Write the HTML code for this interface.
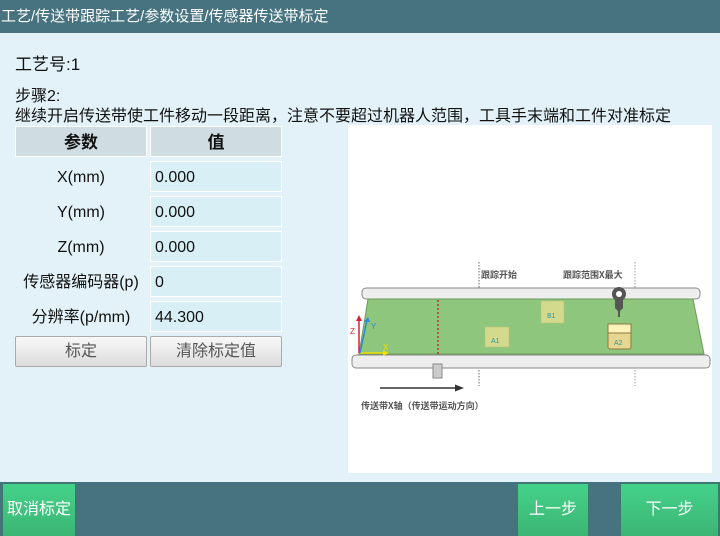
<!DOCTYPE html>
<html><head><meta charset="utf-8"><style>
*{margin:0;padding:0;box-sizing:border-box}
body{width:720px;height:536px;overflow:hidden;background:#e2f2f8;font-family:"Liberation Sans","Noto Sans CJK SC",sans-serif;position:relative;color:#111}
.hdr{position:absolute;left:0;top:0;width:720px;height:33px;background:#46737f;color:#fff;font-size:15px;line-height:33px;padding-left:1px}
.t{position:absolute;font-size:16px;white-space:nowrap}
.cell{position:absolute;height:31px;line-height:31px;font-size:16px;white-space:nowrap}
.h{background:#cfdde2;border:1px solid #fff;text-align:center;font-weight:bold;font-size:17px}
.lab{text-align:center;line-height:33px}
.val{background:#d8eff6;border:1px solid #fff;padding-left:4px}
.btn{position:absolute;height:31px;line-height:29px;text-align:center;font-size:16px;color:#555;background:linear-gradient(#f8f8f8,#dcdcdc);border:1px solid #aaa;border-radius:2px}
.bar{position:absolute;left:0;top:482px;width:720px;height:54px;background:#46737f}
.gb{position:absolute;top:484px;height:52px;background:linear-gradient(#44d28a,#3cb574);color:#fff;font-size:16px;text-align:center;line-height:52px;box-shadow:0 0 2px #2a8a55}
</style></head><body>
<div class="hdr">工艺/传送带跟踪工艺/参数设置/传感器传送带标定</div>
<div class="t" style="left:15px;top:50px;font-size:17px">工艺号:1</div>
<div class="t" style="left:15px;top:82px">步骤2:</div>
<div class="t" style="left:15px;top:102px">继续开启传送带使工件移动一段距离，注意不要超过机器人范围，工具手末端和工件对准标定</div>

<div class="cell h" style="left:15px;top:126px;width:132px">参数</div>
<div class="cell h" style="left:150px;top:126px;width:132px">值</div>
<div class="cell lab" style="left:15px;top:161px;width:132px">X(mm)</div>
<div class="cell val" style="left:150px;top:161px;width:132px">0.000</div>
<div class="cell lab" style="left:15px;top:196px;width:132px">Y(mm)</div>
<div class="cell val" style="left:150px;top:196px;width:132px">0.000</div>
<div class="cell lab" style="left:15px;top:231px;width:132px">Z(mm)</div>
<div class="cell val" style="left:150px;top:231px;width:132px">0.000</div>
<div class="cell lab" style="left:15px;top:266px;width:132px">传感器编码器(p)</div>
<div class="cell val" style="left:150px;top:266px;width:132px">0</div>
<div class="cell lab" style="left:15px;top:301px;width:132px">分辨率(p/mm)</div>
<div class="cell val" style="left:150px;top:301px;width:132px">44.300</div>
<div class="btn" style="left:15px;top:336px;width:132px">标定</div>
<div class="btn" style="left:150px;top:336px;width:132px">清除标定值</div>

<svg style="position:absolute;left:348px;top:125px" width="364" height="348" viewBox="348 125 364 348">
<rect x="348" y="125" width="364" height="348" fill="#fff"/>
<line x1="479" y1="262" x2="479" y2="386" stroke="#666" stroke-width="1" stroke-dasharray="1.5,1.5"/>
<line x1="635" y1="262" x2="635" y2="386" stroke="#999" stroke-width="1" stroke-dasharray="1.5,1.5"/>
<text x="481" y="278" font-size="9" font-weight="bold" fill="#555" font-family="Noto Sans CJK SC,sans-serif">跟踪开始</text>
<text x="563" y="278" font-size="9" font-weight="bold" fill="#555" font-family="Noto Sans CJK SC,sans-serif">跟踪范围X最大</text>
<rect x="362" y="288" width="338" height="11" rx="4" fill="#eee" stroke="#888"/>
<polygon points="368,299 693,299 704,354 359,354" fill="#8fc67e" stroke="#6a9a5a"/>
<line x1="438" y1="300" x2="438" y2="354" stroke="#d3282a" stroke-width="1.5" stroke-dasharray="2,2"/>
<rect x="485" y="327" width="24" height="20" fill="#d3d98d" stroke="#b9c06a" stroke-dasharray="1.5,1.5"/>
<text x="491" y="343" font-size="7" fill="#2a9aa5">A1</text>
<rect x="541" y="301" width="23" height="22" fill="#d3d98d" stroke="#b9c06a" stroke-dasharray="1.5,1.5"/>
<text x="547" y="318" font-size="7" fill="#2a9aa5">B1</text>
<circle cx="619" cy="294" r="7" fill="#555"/><circle cx="619" cy="294" r="3" fill="#fff"/>
<path d="M615 299h8v9l-3 3v6h-2v-6l-3-3z" fill="#555"/>
<rect x="608" y="324" width="23" height="25" rx="2" fill="#e7d690" stroke="#8a7a40"/>
<rect x="608" y="324" width="23" height="9" fill="#fff2b8" stroke="#8a7a40"/>
<text x="614" y="345" font-size="7" fill="#2a9aa5">A2</text>
<rect x="352" y="355" width="358" height="13" rx="4" fill="#eee" stroke="#888"/>
<line x1="360" y1="353" x2="386" y2="353" stroke="#f0e000" stroke-width="1.5"/>
<path d="M389 353l-6-3v6z" fill="#f0e000"/>
<text x="383" y="350" font-size="8" fill="#f0e000">X</text>
<line x1="359" y1="353" x2="359" y2="318" stroke="#e02030" stroke-width="1.5"/>
<path d="M359 315l-3 6h6z" fill="#e02030"/>
<text x="350" y="334" font-size="8" fill="#e02030">Z</text>
<line x1="360" y1="353" x2="367" y2="320" stroke="#2a8ad8" stroke-width="1.5"/>
<path d="M368 317l-4 5h6z" fill="#2a8ad8"/>
<text x="371" y="329" font-size="8" fill="#2a8ad8">Y</text>
<rect x="433" y="364" width="9" height="14" fill="#ccc" stroke="#888"/>
<line x1="380" y1="388" x2="455" y2="388" stroke="#333" stroke-width="1.5"/>
<path d="M464 388l-9-3.5v7z" fill="#333"/>
<text x="361" y="409" font-size="9" font-weight="bold" fill="#555" font-family="Noto Sans CJK SC,sans-serif">传送带X轴（传送带运动方向）</text>
</svg>

<div class="bar"></div>
<div class="gb" style="left:3px;width:72px">取消标定</div>
<div class="gb" style="left:518px;width:70px">上一步</div>
<div class="gb" style="left:621px;width:97px">下一步</div>
</body></html>
